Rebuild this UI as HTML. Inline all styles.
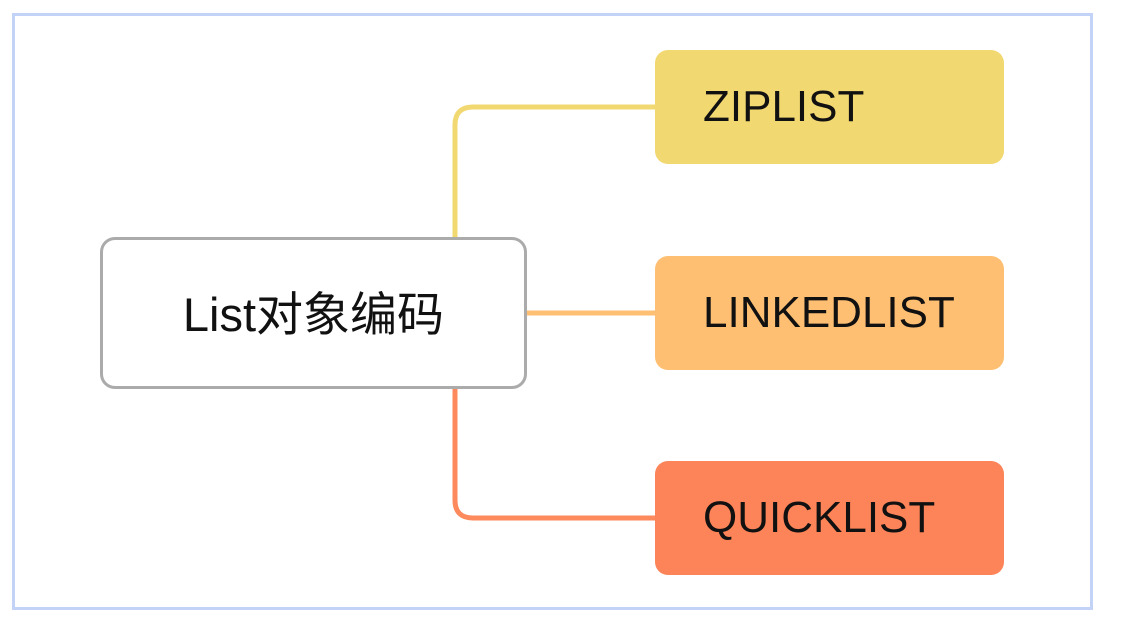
<!DOCTYPE html>
<html><head><meta charset="utf-8"><style>
html,body{margin:0;padding:0;background:#fff;width:1127px;height:618px;overflow:hidden;font-family:"Liberation Sans","Noto Sans CJK SC",sans-serif}
.frame{position:absolute;left:12px;top:13px;width:1075px;height:591px;border:3px solid #c3d3f7}
.box{position:absolute;left:655px;width:349px;height:114px;border-radius:13px;color:#111;font-size:44px;line-height:114px;padding-left:48px;box-sizing:border-box}
.c{position:absolute;left:100px;top:237px;width:427px;height:152px;box-sizing:border-box;border:3px solid #ababab;border-radius:15px;background:#fff;text-align:center;line-height:150px;font-size:47px;color:#111}
svg{position:absolute;left:0;top:0}
</style></head><body>
<div class="frame"></div>
<svg width="1127" height="618">
<path d="M455 240 V125 Q455 107 473 107 H660" fill="none" stroke="#f2d870" stroke-width="5"/>
<path d="M520 313 H660" fill="none" stroke="#ffbf73" stroke-width="5"/>
<path d="M455 385 V500 Q455 518 473 518 H660" fill="none" stroke="#fc8a5c" stroke-width="5"/>
</svg>
<div class="c">List对象编码</div>
<div class="box" style="top:50px;background:#f2d870">ZIPLIST</div>
<div class="box" style="top:256px;background:#ffbf73">LINKEDLIST</div>
<div class="box" style="top:461px;background:#fc8458">QUICKLIST</div>
</body></html>
